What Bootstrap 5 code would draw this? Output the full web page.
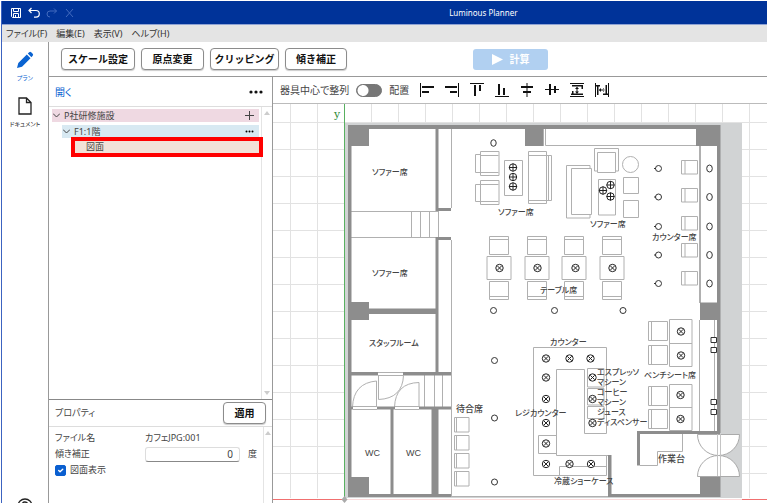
<!DOCTYPE html>
<html lang="ja">
<head>
<meta charset="utf-8">
<meta name="viewport" content="width=device-width, initial-scale=1">
<title>Luminous Planner</title>
<link href="https://cdn.jsdelivr.net/npm/bootstrap@5.3.0/dist/css/bootstrap.min.css" rel="stylesheet">
<style>
body{font-family:"Noto Sans","Noto Sans CJK JP",sans-serif;font-size:10px;line-height:16px;color:#444;background:#fff;font-feature-settings:"palt"}
.app-window{border-left:1px solid #3c63c0;margin:1px 5px 0 1px}
.title-bar{background:#039;color:#fff;height:24px;border-bottom:1px solid #8fa3d4;padding-left:7px;gap:4px}
.title-bar .btn{padding:0;border:0;line-height:1;width:14px;height:14px;color:#fff;display:flex}
.title-bar .btn:disabled{color:#6f90d8;opacity:.6}
.title-text{font-size:8px;margin-left:33%;padding-left:118px}
.menu-bar{background:#e4e4e4;height:17px;padding-left:4px;gap:9px}
.menu-bar a{color:#333;font-size:9px;line-height:17px}
.rail{width:47px;border-right:1px solid #999;padding-top:9px}
.rail a{color:#222;font-size:6px;line-height:10px;white-space:nowrap}
.rail a.is-current{color:#0a63d1}
.rail .rail-doc{margin-top:14px}
.tool-bar{height:35px;border-bottom:1px solid #999;padding-left:12px;gap:6px}
.tool-btn{border:1px solid #8c8c8c;border-radius:4px;background:#fff;color:#111;font-size:10px;font-weight:700;line-height:20px;padding:0;height:22px;box-shadow:0 1px 1px #ccc}
.w-a{width:74px}.w-b{width:63px}.w-c{width:69px}.w-d{width:62px}.w-e{width:43px}
.calc-btn{background:#b1d0f1;border:0;border-radius:3px;color:#fff;font-size:10px;font-weight:700;width:75px;height:21px;padding:0;gap:7px;margin-left:120px;opacity:1!important}
.side{width:224px;border-right:1px solid #999}
.side-head{height:30px;border-bottom:1px solid #ddd;padding:0 9px 0 6px}
.side-head a{color:#0a63d1;font-size:10px}
.icon-btn{border:0;background:none;padding:0;line-height:0;color:#111}
.scroll-col{width:11px;border-left:1px solid #e4e4e4;padding:4px 0}
.tree{padding:2px 2px 0 3px;gap:3px;font-size:9px}
.tree-row{height:13px;line-height:13px;gap:4px;padding:0 5px 0 1px}
.row-site{background:#efd9e2}
.row-floor{background:#d8e9f2;margin-left:10px}
.row-plan{background:#f2e2d8;border:4px solid #f00;height:20px;line-height:12px;margin:-4px -4px 0 19px;padding-left:11px;z-index:1}
.props-head{border-top:1px solid #888;border-bottom:1px solid #ddd;height:28px;padding:0 6px 0 6px;font-size:9px}
.props{height:104px}
.props-body{padding:3px 6px 0;font-size:9px}
.prop-label{width:90px}
.prop-row{height:16px}
.prop-input{width:95px;height:15px;border:1px solid #ddd;border-bottom-color:#888;border-radius:3px;font-size:10px;line-height:13px;text-align:right;padding:0 6px;color:#444}
.form-check-input.show-check{width:11px;height:11px;margin:0;border-radius:2px}
.form-check-input.show-check:checked{background-color:#0a5fd0;border-color:#0a5fd0}
.align-bar{height:27px;border-bottom:1px solid #bbb;padding-left:7px;gap:7px}
.form-switch.switch-box{min-height:0}
.form-switch .form-check-input.center-switch{width:26px;height:13px;margin:0;background-color:#777;border-color:#777;background-image:radial-gradient(circle at 6px 50%,#fff 5px,transparent 6px);background-size:100% 100%;background-position:0 0}
.align-icons{gap:11px;margin-left:4px}
.drawing text{font-family:"Noto Sans CJK JP",sans-serif;font-size:8px;font-weight:500;fill:#444}
.drawing .room-name{font-family:"Liberation Sans",Arial,sans-serif;font-size:9px}
.drawing .axis-name{font-family:"DejaVu Serif",serif;font-size:11px;font-weight:400;fill:#2a8a35}
.drawing .big-name{font-size:9px}
.thin{fill:none;stroke:#b0b0b0}
.wall{fill:#8d8d8d}
.spot{fill:#fff;stroke:#333}
</style>
<script src="https://cdn.jsdelivr.net/npm/bootstrap@5.3.0/dist/js/bootstrap.bundle.min.js"></script>
</head>
<body class="vh-100 d-flex flex-column overflow-hidden">
<div class="app-window d-flex flex-column flex-grow-1 overflow-hidden">
  <header class="title-bar d-flex align-items-center flex-shrink-0">
    <button class="btn" type="button" aria-label="保存"><svg width="14" height="14" viewBox="0 0 14 14" fill="none" stroke="currentColor"><path d="M2.500 2.500h9v9h-8l-1-1zM4.500 2.500v3h5v-3M4.500 11.500v-4h5v4M6.500 9v2"/></svg></button>
    <button class="btn" type="button" aria-label="元に戻す"><svg width="14" height="14" viewBox="0 0 14 14" fill="none" stroke="currentColor" stroke-width="1.200"><path d="M4.500 2 2 4.500 4.500 7M2 4.500h7a3.300 3.300 0 0 1 0 6.600H7"/></svg></button>
    <button class="btn" type="button" disabled aria-label="やり直し"><svg width="14" height="14" viewBox="0 0 14 14" fill="none" stroke="currentColor"><path d="M9 2.500 11.500 5 9 7.500M11.500 5H5a3 3 0 0 0 0 6"/></svg></button>
    <button class="btn" type="button" disabled aria-label="削除"><svg width="14" height="14" viewBox="0 0 14 14" stroke="currentColor"><path d="m3 3 7 8M10 3l-7 8"/></svg></button>
    <span class="title-text text-nowrap">Luminous Planner</span>
  </header>
  <nav class="menu-bar d-flex flex-shrink-0">
    <a class="text-decoration-none" href="#">ファイル(F)</a><a class="text-decoration-none" href="#">編集(E)</a><a class="text-decoration-none" href="#">表示(V)</a><a class="text-decoration-none" href="#">ヘルプ(H)</a>
  </nav>
  <div class="d-flex flex-grow-1 overflow-hidden">
    <nav class="rail d-flex flex-column align-items-center flex-shrink-0 overflow-hidden">
      <a class="is-current text-decoration-none d-flex flex-column align-items-center" href="#"><svg class="mb-1" width="18" height="18" viewBox="0 0 18 18" fill="currentColor"><path d="m1 17 1.300-5L10.800 3.500l3.700 3.700L6 15.700zM11.800 2.500l1.400-1.300q1-.8 2 .1l1.500 1.500q.9 1 0 1.900l-1.300 1.500z"/></svg>プラン</a>
      <a class="rail-doc text-decoration-none d-flex flex-column align-items-center" href="#"><svg class="mb-1" width="16" height="18" viewBox="0 0 16 18" fill="none" stroke="currentColor" stroke-width="1.300"><path d="M2 1h7.500L14 5.500V17H2zM9.500 1v4.500H14"/></svg>ドキュメント</a>
      <a class="mt-auto" href="#" aria-label="ヘルプ"><svg class="d-block" width="16" height="5" viewBox="0 0 16 5" fill="none" stroke="currentColor" stroke-width="1.300"><circle cx="8" cy="8" r="7"/><path d="M5.500 5q2-2 5 0"/></svg></a>
    </nav>
    <main class="d-flex flex-column flex-grow-1 overflow-hidden">
      <div class="tool-bar d-flex align-items-center flex-shrink-0">
        <button type="button" class="tool-btn w-a">スケール設定</button>
        <button type="button" class="tool-btn w-b">原点変更</button>
        <button type="button" class="tool-btn w-c">クリッピング</button>
        <button type="button" class="tool-btn w-d">傾き補正</button>
        <button type="button" class="calc-btn d-flex align-items-center justify-content-center" disabled><svg width="11" height="11" viewBox="0 0 11 11" fill="currentColor"><path d="M0 0 11 5.500 0 11z"/></svg>計算</button>
      </div>
      <div class="d-flex flex-grow-1 overflow-hidden">
        <aside class="side d-flex flex-column flex-shrink-0">
          <div class="side-head d-flex align-items-center justify-content-between flex-shrink-0">
            <a class="text-decoration-none" href="#">開く</a>
            <button type="button" class="icon-btn" aria-label="その他"><svg width="14" height="4" viewBox="0 0 14 4" fill="currentColor"><circle cx="2" cy="2" r="1.600"/><circle cx="7" cy="2" r="1.600"/><circle cx="12" cy="2" r="1.600"/></svg></button>
          </div>
          <div class="d-flex flex-grow-1">
            <div class="tree d-flex flex-column flex-grow-1">
              <div class="tree-row row-site d-flex align-items-center"><svg width="7" height="5" viewBox="0 0 7 5" fill="none" stroke="#444"><path d="m0 .5 3.500 3.500L7 .5"/></svg><span class="flex-grow-1">P社研修施設</span><button type="button" class="icon-btn" aria-label="追加"><svg width="9" height="9" viewBox="0 0 9 9" stroke="#444"><path d="M4.500 0v9M0 4.500h9"/></svg></button></div>
              <div class="tree-row row-floor d-flex align-items-center"><svg width="7" height="5" viewBox="0 0 7 5" fill="none" stroke="#444"><path d="m0 .5 3.500 3.500L7 .5"/></svg><span class="flex-grow-1">F1:1階</span><button type="button" class="icon-btn" aria-label="階のメニュー"><svg width="9" height="3" viewBox="0 0 9 3"><circle cx="1.500" cy="1.500" r="1"/><circle cx="4.500" cy="1.500" r="1"/><circle cx="7.500" cy="1.500" r="1"/></svg></button></div>
              <div class="tree-row row-plan position-relative">図面</div>
            </div>
            <div class="scroll-col d-flex flex-column justify-content-between align-items-center"><svg width="6" height="4"><path d="M0 4h6L3 0z" fill="#ccc"/></svg><svg width="6" height="4"><path d="M0 0h6L3 4z" fill="#ccc"/></svg></div>
          </div>
          <section class="props flex-shrink-0 d-flex flex-column">
            <div class="props-head d-flex align-items-center justify-content-between flex-shrink-0"><span>プロパティ</span><button type="button" class="tool-btn w-e">適用</button></div>
            <div class="d-flex flex-grow-1">
              <div class="props-body flex-grow-1">
                <div class="prop-row d-flex align-items-center"><span class="prop-label">ファイル名</span><span>カフェJPG:001</span></div>
                <div class="prop-row d-flex align-items-center"><label class="prop-label" for="tilt">傾き補正</label><input class="prop-input" id="tilt" type="text" value="0"><span class="ps-2">度</span></div>
                <div class="prop-row d-flex align-items-center gap-1"><input class="form-check-input show-check" id="show" type="checkbox" checked><label for="show">図面表示</label></div>
              </div>
              <div class="scroll-col"><svg class="d-block mx-auto" width="6" height="4"><path d="M0 4h6L3 0z" fill="#ccc"/></svg></div>
            </div>
          </section>
        </aside>
        <section class="d-flex flex-column flex-grow-1 overflow-hidden">
          <div class="align-bar d-flex align-items-center flex-shrink-0">
            <label for="centre">器具中心で整列</label>
            <div class="form-check form-switch switch-box p-0 m-0 d-flex"><input class="form-check-input center-switch" type="checkbox" role="switch" id="centre"></div>
            <span>配置</span>
            <div class="align-icons d-flex">
              <button type="button" class="icon-btn" aria-label="左揃え"><svg width="14" height="14" viewBox="0 0 14 14" fill="currentColor"><path d="M0 0h1v14H0zM2 3h12v2H2zM2 8h7v2H2z"/></svg></button>
              <button type="button" class="icon-btn" aria-label="右揃え"><svg width="14" height="14" viewBox="0 0 14 14" fill="currentColor"><path d="M13 0h1v14h-1zM0 3h12v2H0zM5 8h7v2H5z"/></svg></button>
              <button type="button" class="icon-btn" aria-label="上揃え"><svg width="14" height="14" viewBox="0 0 14 14" fill="currentColor"><path d="M0 0h14v1H0zM4 2h2v11H4zM9 2h2v6H9z"/></svg></button>
              <button type="button" class="icon-btn" aria-label="下揃え"><svg width="14" height="14" viewBox="0 0 14 14" fill="currentColor"><path d="M0 13h14v1H0zM3 1h2v11H3zM8 5h2v7H8z"/></svg></button>
              <button type="button" class="icon-btn" aria-label="左右中央"><svg width="14" height="14" viewBox="0 0 14 14" fill="currentColor"><path d="M6.500 0h1v14h-1zM1 3h12v2H1zM3 8h8v2H3z"/></svg></button>
              <button type="button" class="icon-btn" aria-label="上下中央"><svg width="14" height="14" viewBox="0 0 14 14" fill="currentColor"><path d="M0 6h14v1H0zM4 1h2v11H4zM9 3h2v7H9z"/></svg></button>
              <button type="button" class="icon-btn" aria-label="縦に等間隔"><svg width="14" height="14" viewBox="0 0 14 14" fill="currentColor"><path d="M0 0h14v1H0zM0 13h14v1H0zM2 2h11v1.500H2zM11.500 2H13v4h-1.500zM1 10.500h12V12H1zM2 8h1.500v3H2zM6.500 4h1v6h-1zM5 6l2-2.200L9 6zM5 8.500h4l-2 2.200z"/></svg></button>
              <button type="button" class="icon-btn" aria-label="横に等間隔"><svg width="14" height="14" viewBox="0 0 14 14" fill="currentColor"><path d="M0 0h1v14H0zM13 0h1v14h-1zM1 2h4v1.500H1zM2 2h1.500v10H2zM10.500 2H12v10h-1.500zM8 10.500h5V12H8zM4 6.500h6v1H4zM6 5v4L3.800 7zM8 5v4l2.200-2z"/></svg></button>
            </div>
          </div>
          <div class="flex-grow-1 overflow-hidden">
<svg class="drawing d-block" width="100%" height="100%" role="img" aria-label="フロア図面">
<defs>
<pattern id="grid" x="290" y="122" width="27" height="27" patternUnits="userSpaceOnUse"><path d="M.5 0v27M0 .5h27" stroke="#e2e2e2"/></pattern>
<g id="lamp" fill="#fff" stroke="#222"><circle r="3.700"/><path d="m-2.200-2.200 4.400 4.400M2.200-2.200l-4.400 4.400"/></g>
<g id="down" fill="#fff" stroke="#222"><circle r="3.700"/><path d="M-4 0h8M0-4v8"/></g>
<g id="set" class="thin"><path d="M0 20.500h24v23H0zM2.500.5h19v18h-19zM2.500 3.500h19M2.500 45.500h19v18h-19zM2.500 60.500h19"/></g>
<g id="stool" class="thin"><path d="M0 0h16v13.500H0zM3.500 0v13.500"/></g>
<g id="seat" class="thin"><path d="M0 0h14.500v14.500H0zM2 0v14.500"/></g>
<g id="bench" class="thin"><path d="M0 0h19v19H0zM3 0v19"/></g>
</defs>
<g transform="translate(-273 -104)">
<rect x="273" y="104" width="3000" height="394" fill="url(#grid)"/>
<rect x="345" y="123" width="397" height="375" fill="#d1d3d4"/>
<rect x="348" y="125" width="372" height="372" fill="#fff"/>
<path d="M273 499.500h72M742 499.500h3000" stroke="#f17070"/>
<path d="M345 499.500h397" stroke="#fbdcdc"/>
<path d="M344.500 104v395" stroke="#58b060"/>
<path d="m344.500 496 3 3.500-3 3.500-3-3.500z" fill="#aaa"/>
<g class="thin">
<path d="M451.500 128v80M451.500 240v257M351 211.500h87M351 237.500h85M411.500 211v26M420.500 211v26M429.500 211v26M438.500 211v26M424.500 375v32M434.500 375v32M442.500 375v32"/>
<path d="M353 406.500h24M353 409.500h24M395 406.500h24M395 409.500h24M378 372.500h25M378 375.500h25M376.500 381v26M352.500 407q1-24 24-26M378.500 375v24.500q24-1 25-24M394.500 407q1-24 24.500-24.500v24.500"/>
<path d="M451 496.500h157M543.500 128v18M545.500 128v17.500h151M699.500 146v157M700.500 146v157M699.500 320v111M714.500 320v111M717.500 320v111"/>
</g>
<path class="wall" d="M348 125h372v4H348zM348 125h3.500v372H348zM717 125h3.500v308H717zM348 125h21v21h-21zM525 125h18v21h-18zM696 125h24v21h-24zM348 302h21v18h-21zM700 302.500h20V320h-20zM348 477h21v20h-21zM700 477h20.500v20H700zM435.500 128h3v83h-3zM436 208h15v3h-15zM436 237h15v3h-15zM435.500 237h3v137h-3zM351 308.500h86v5.500h-86zM351 372h27v3.500h-27zM403 372h48v3.500h-48zM351 406.500h2v3h-2zM377 406.500h18v3h-18zM419 406.500h32v3h-32zM390.500 408h3v88h-3zM431.500 408h7v88h-7zM351 494h100v3H351zM637 431h83v3h-83zM637 431h3v34.500h-3zM608 455h3.500v42H608zM608 494h95v3h-95z"/>
<path d="M697.500 434.500h42a21 21 0 0 1-42 0zM697.500 476.500h42a21 21 0 0 0-42 0z" fill="#fff" stroke="#aaa"/>
<path d="M717.500 434v42M720.500 434v42" stroke="#c4c4c4"/>
<g class="thin">
<path d="M480.500 151.500h18.500v24h-18.500zM480.500 155.500h18M480.500 172.500h18M475.500 154.500h5v18h-5zM480.500 180.500h18.500v24h-18.500zM480.500 184.500h18M480.500 201.500h18M475.500 184.500h5v17h-5zM504.500 160.500h18v35h-18zM528.500 151.500h18v52h-18zM528.500 155.500h23v45h-23M548.500 155v45"/>
<path d="M590 168.500v-3h-23.500v52.500H590v-3M571.500 168.500h20v46h-20zM597.500 171h-3v-22.500h24V171h-3M597.500 152.500h18v20h-18zM598.500 179.500h17v35.500h-17zM623.500 177.500h15v16h-15zM623.500 200.500h15v17h-15z"/><circle cx="630.500" cy="164.500" r="8"/>
<path d="M640 465.500h17.500v-14h25V434M533.500 347.500h73v86h-22v-64h-28v86H608M533.500 347.500v128h73v-20M538.500 435.500h18v18h-18zM559.500 475v-8.500h47M587.500 368.500H604V387h-16.500zM587.500 388.500H604V405h-16.500zM587.500 406.500H604v12h-16.500zM669.500 319.500h22.500v47h-22.500zM669.500 343.500H692M669.500 384.500h22.500v46h-22.500zM669.500 407.500H692"/>
</g>
<use href="#set" x="487" y="236"/><use href="#set" x="525" y="236"/><use href="#set" x="562" y="236"/><use href="#set" x="600" y="236"/>
<use href="#stool" x="681.500" y="160.500"/><use href="#stool" x="681.500" y="188.500"/><use href="#stool" x="681.500" y="216.500"/><use href="#stool" x="681.500" y="243.500"/><use href="#stool" x="681.500" y="271.500"/>
<use href="#seat" x="454.500" y="417.500"/><use href="#seat" x="454.500" y="435.500"/><use href="#seat" x="454.500" y="453.500"/><use href="#seat" x="454.500" y="471.500"/>
<use href="#bench" x="648.500" y="321.500"/><use href="#bench" x="648.500" y="345.500"/><use href="#bench" x="648.500" y="386.500"/><use href="#bench" x="648.500" y="409.500"/>
<use href="#lamp" x="499.500" y="268"/><use href="#lamp" x="537.500" y="268"/><use href="#lamp" x="575.500" y="268"/><use href="#lamp" x="612.500" y="268"/>
<use href="#lamp" x="546" y="358.500"/><use href="#lamp" x="569.500" y="358.500"/><use href="#lamp" x="590.500" y="358.500"/><use href="#lamp" x="546" y="377.500"/><use href="#lamp" x="546" y="399"/><use href="#lamp" x="546" y="423"/><use href="#lamp" x="546" y="443.500"/><use href="#lamp" x="546" y="464"/><use href="#lamp" x="569.500" y="464"/><use href="#lamp" x="591" y="464"/><use href="#lamp" x="592.500" y="377.500"/><use href="#lamp" x="592.500" y="399"/><use href="#lamp" x="592.500" y="423"/>
<use href="#lamp" x="681" y="331.500"/><use href="#lamp" x="681" y="355.500"/><use href="#lamp" x="680.500" y="395"/><use href="#lamp" x="680.500" y="419"/>
<use href="#down" x="513" y="167.500"/><use href="#down" x="513" y="177"/><use href="#down" x="513" y="186.500"/><use href="#down" x="610.500" y="185"/><use href="#down" x="603" y="190.500"/><use href="#down" x="610.500" y="196.500"/>
<g class="spot">
<ellipse cx="493.500" cy="143" rx="2.700" ry="3.300"/><circle cx="493.500" cy="310.500" r="3"/><circle cx="554.500" cy="310.500" r="3"/><circle cx="623" cy="310.500" r="3"/><circle cx="494.500" cy="360.500" r="3"/><circle cx="494.500" cy="418" r="3"/><circle cx="494.500" cy="482" r="3"/>
<circle cx="658.500" cy="168.500" r="3"/><circle cx="658.500" cy="197" r="3"/><circle cx="658.500" cy="226.500" r="3"/><circle cx="658.500" cy="255" r="3"/><circle cx="658.500" cy="283.500" r="3"/>
<path d="M654 168.500h2M654 197h2M654 226.500h2M654 255h2M654 283.500h2"/>
<ellipse cx="709.500" cy="168.500" rx="2.800" ry="3.500"/><ellipse cx="709.500" cy="197" rx="2.800" ry="3.500"/><ellipse cx="709.500" cy="226.500" rx="2.800" ry="3.500"/><ellipse cx="709.500" cy="255" rx="2.800" ry="3.500"/><ellipse cx="709.500" cy="283.500" rx="2.800" ry="3.500"/>
<path d="M711 337.500h5.500v5H711zM711 347.500h5.500v5H711zM711 399.500h5.500v5H711zM711 409.500h5.500v5H711z"/>
</g>
<text class="axis-name" x="334" y="118">y</text>
<text x="372" y="175">ソファー席</text><text x="498" y="215">ソファー席</text><text x="590" y="227">ソファー席</text><text x="372" y="276">ソファー席</text>
<text x="652" y="240">カウンター席</text><text x="540" y="293">テーブル席</text><text x="369" y="346">スタッフルーム</text><text class="big-name" x="456" y="412">待合席</text>
<text class="room-name" x="365" y="456">WC</text><text class="room-name" x="406" y="456">WC</text>
<text x="550" y="345">カウンター</text><text x="597" y="375">エスプレッソ</text><text x="597" y="385">マシーン</text><text x="597" y="395">コーヒー</text><text x="597" y="405">マシーン</text><text x="597" y="415">ジュース</text><text x="597" y="425">ディスペンサー</text>
<text x="644" y="378">ベンチシート席</text><text x="515" y="416">レジカウンター</text><text class="big-name" x="658" y="462">作業台</text><text x="554" y="484">冷蔵ショーケース</text>
</g>
</svg>
          </div>
        </section>
      </div>
    </main>
  </div>
</div>
</body>
</html>
